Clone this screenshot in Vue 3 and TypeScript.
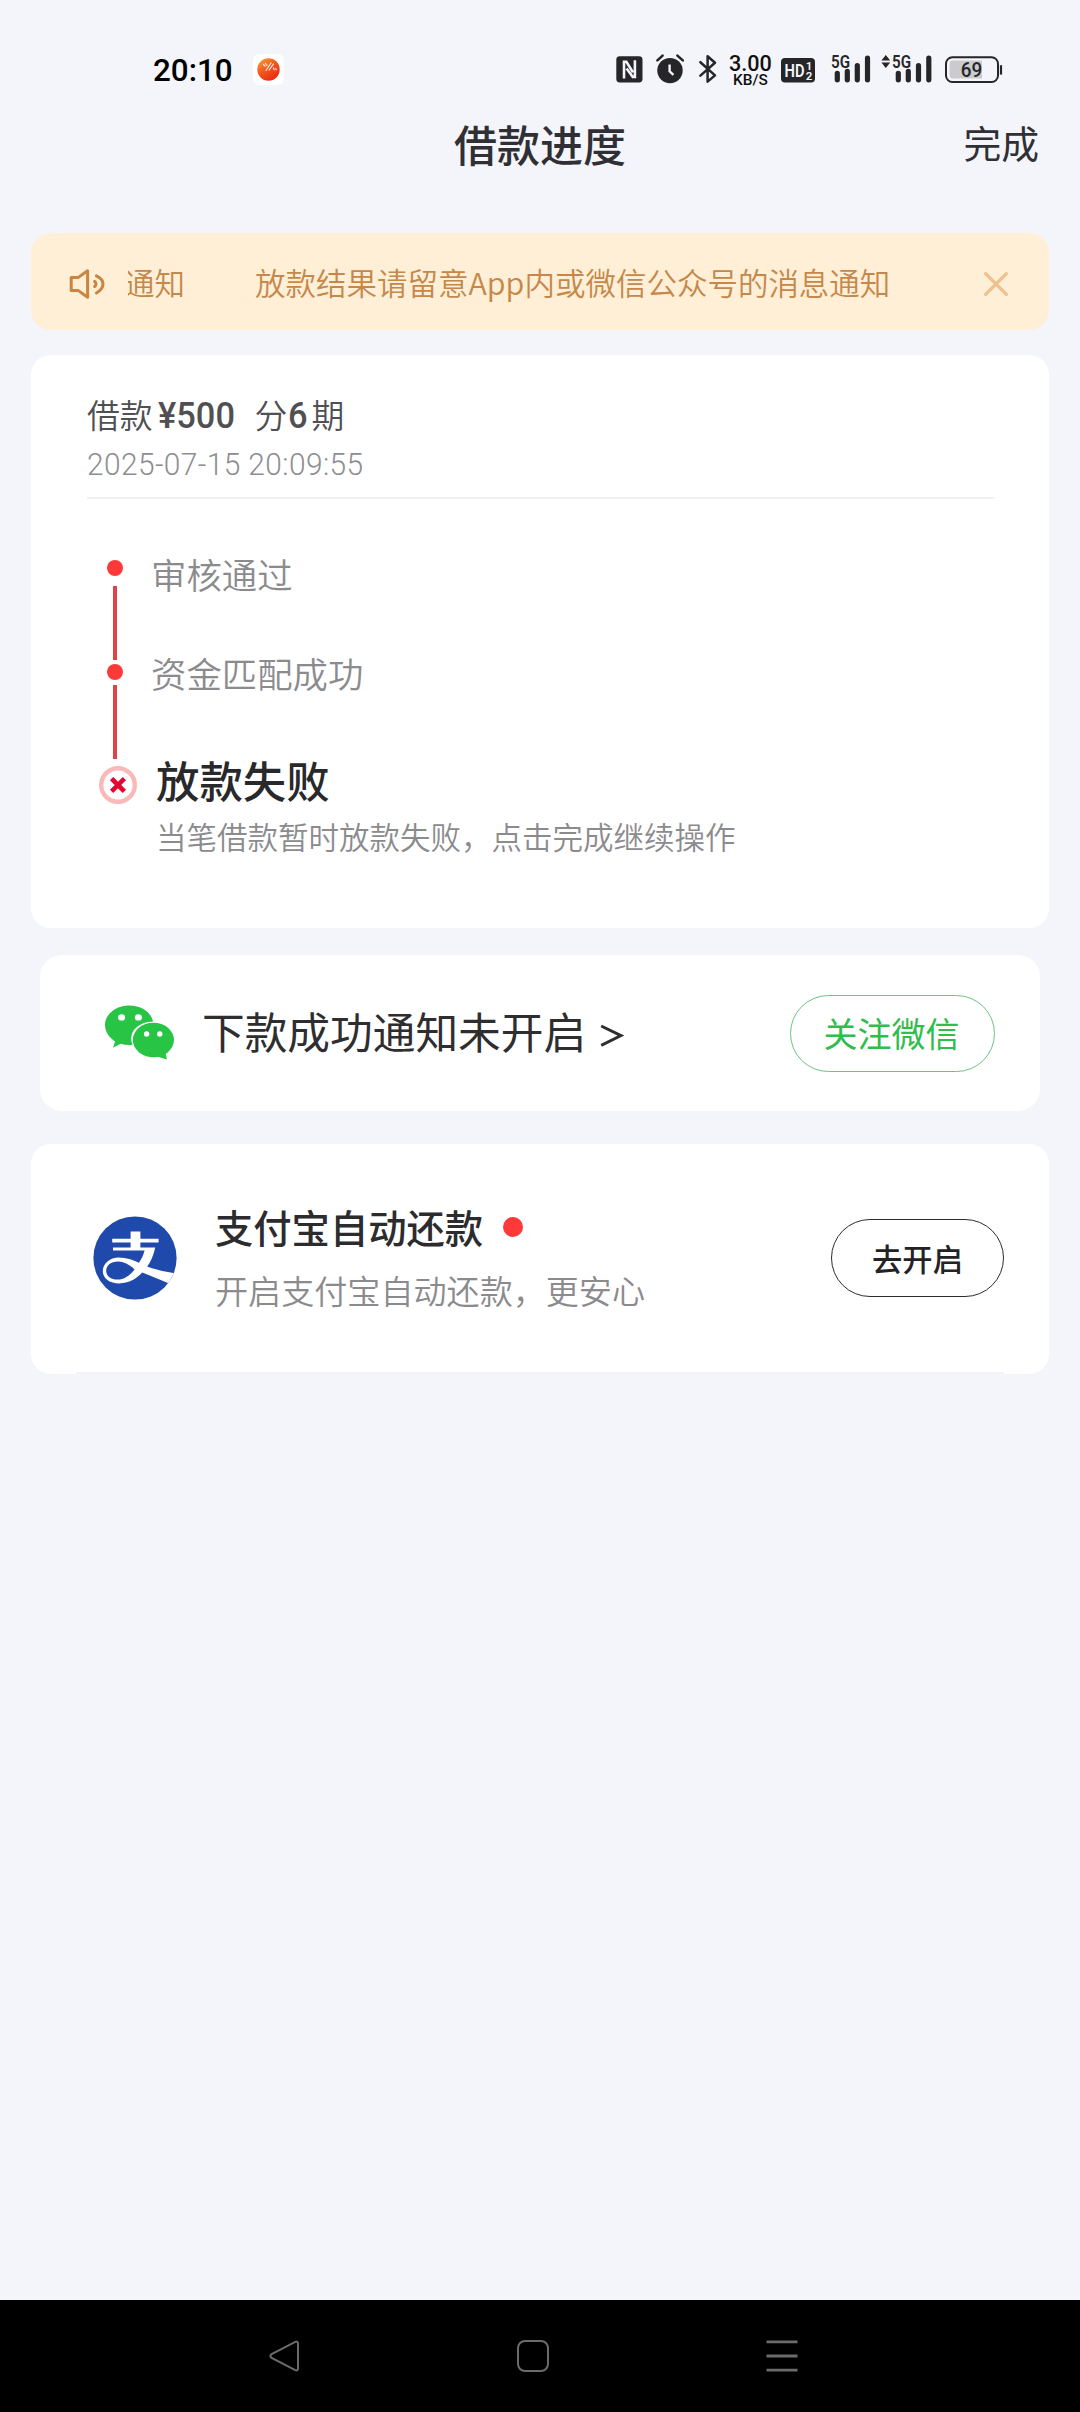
<script setup lang="ts">
interface Step {
  key: string
  label: string
}

const doneSteps: Step[] = [
  { key: 'review', label: '审核通过' },
  { key: 'match', label: '资金匹配成功' },
]
</script>

<template>
  <div class="screen">
    <div class="status">
      <span class="clock">20:10</span>
      <svg class="app-badge" width="31" height="31" viewBox="0 0 31 31">
        <defs>
          <linearGradient id="ball" x1="0.1" y1="0" x2="0.8" y2="1">
            <stop offset="0" stop-color="#f9a13a" />
            <stop offset="0.45" stop-color="#f4581c" />
            <stop offset="1" stop-color="#ea2410" />
          </linearGradient>
        </defs>
        <rect width="31" height="31" rx="6" fill="#fff" />
        <circle cx="15.5" cy="15.5" r="11.2" fill="url(#ball)" />
        <path d="M10.5 10.5l1.5 1.5M12.5 9.5l1.5 2M13 16.5l5-7.5M16.2 16l4.2-6M20.5 14l.6 1.6M22.8 14.5l.4 1.4" fill="none" stroke="#fff" stroke-width="1.2" stroke-linecap="round" opacity="0.9" />
      </svg>

      <svg class="nfc" width="27" height="27" viewBox="0 0 27 27">
        <rect x="0.3" y="0.3" width="26.2" height="26.2" rx="3.4" fill="#262629" />
        <path d="M8 22.4V5.8H10.4L17 16.4M18.9 4.3V21H16.8L10.6 12.4" fill="none" stroke="#f5f6fb" stroke-width="2.6" />
      </svg>
      <svg class="alarm" width="28" height="30" viewBox="0 0 28 30">
        <circle cx="14" cy="16.6" r="12.7" fill="#262629" />
        <path d="M1.4 6.4L6.6 1.6M21.4 1.6L26.8 6.4" stroke="#262629" stroke-width="2.6" stroke-linecap="round" />
        <path d="M13.6 10.5V17.3L17.4 20.8" fill="none" stroke="#f5f6fb" stroke-width="2.4" />
      </svg>
      <svg class="bluetooth" width="18" height="30" viewBox="0 0 18 30">
        <path d="M1.4 8.2L16 21.4L8.6 27.6V2.2L16 8.8L1.4 21.6" fill="none" stroke="#262629" stroke-width="2.5" stroke-linejoin="round" stroke-linecap="round" />
      </svg>
      <div class="speed"><b>3.00</b><i>KB/S</i></div>
      <svg class="hd" width="34" height="25" viewBox="0 0 34 25">
        <rect width="34" height="24.6" rx="4" fill="#262629" />
        <text x="3.6" y="19" font-size="18" font-weight="600" fill="#f5f6fb" textLength="20" lengthAdjust="spacingAndGlyphs">HD</text>
        <text x="24.8" y="12" font-size="11.5" font-weight="600" fill="#f5f6fb">1</text>
        <text x="24.8" y="22" font-size="11.5" font-weight="600" fill="#f5f6fb">2</text>
      </svg>
      <svg class="signal" width="40" height="28" viewBox="0 0 40 28">
        <text x="0" y="13" font-size="18.5" font-weight="600" fill="#262629" textLength="19" lengthAdjust="spacingAndGlyphs">5G</text>
        <path d="M6.3 18.4v6.4M16.3 16.4v8.4M26.3 10.5V24.8M36.5 3.2V24.8" stroke="#262629" stroke-width="5.2" stroke-linecap="round" />
      </svg>
      <svg class="signal-two" width="51" height="28" viewBox="0 0 51 28">
        <path d="M4.8 0L9.2 5.6H0.4ZM4.8 13L9.2 7.6H0.4Z" fill="#262629" />
        <text x="11" y="13" font-size="18.5" font-weight="600" fill="#262629" textLength="19" lengthAdjust="spacingAndGlyphs">5G</text>
        <path d="M17.3 18.4v6.4M27.3 16.4v8.4M37.5 10.5V24.8M47.8 3.2V24.8" stroke="#262629" stroke-width="5.2" stroke-linecap="round" />
      </svg>
      <svg class="battery" width="58" height="28" viewBox="0 0 58 28">
        <rect x="1" y="1.2" width="52" height="24.8" rx="6.5" fill="none" stroke="#262629" stroke-width="2" />
        <path d="M8 4.6H37V22.6H8Q4.6 22.6 4.6 19V8Q4.6 4.6 8 4.6Z" fill="#cbcbcd" />
        <path d="M56 9.2v9.4" stroke="#262629" stroke-width="2.2" />
        <text x="15.8" y="20.5" font-size="19.5" font-weight="500" fill="#262629" textLength="21.5" lengthAdjust="spacingAndGlyphs">69</text>
      </svg>
    </div>

    <header class="nav">
      <h1>借款进度</h1>
      <a class="finish">完成</a>
    </header>

    <section class="notice">
      <svg class="horn" width="36" height="30" viewBox="0 0 36 30">
        <g fill="none" stroke="#c9843f" stroke-width="3" stroke-linejoin="round" stroke-linecap="round">
          <path d="M1.2 8.6H8L17.6 1.8V28.2L8 21.4H1.2Z" />
          <path d="M24.6 12.4Q27.4 15 24.6 17.6" />
          <path d="M26.4 6.8Q33 10 33 15T26.4 24" />
        </g>
      </svg>
      <div class="marquee">
        <span class="tail">通知</span>
        <span>放款结果请留意App内或微信公众号的消息通知</span>
      </div>
      <svg class="dismiss" width="24" height="24" viewBox="0 0 24 24">
        <path d="M1.6 1.6L22.4 22.4M22.4 1.6L1.6 22.4" stroke="#eec08d" stroke-width="3.2" stroke-linecap="round" />
      </svg>
    </section>

    <section class="progress">
      <div class="loan">
        <span>借款</span><b class="amount">¥500</b><span class="split">分</span><b class="count">6</b><span class="unit">期</span>
      </div>
      <div class="time"><span>2025-07-15 20:09:55</span></div>
      <ul class="steps">
        <li v-for="step in doneSteps" :key="step.key" :class="['step', step.key]">
          <div class="rail"><span class="dot"></span><span class="line"></span></div>
          <span class="label">{{ step.label }}</span>
        </li>
        <li class="step failed">
          <svg width="38" height="38" viewBox="0 0 38 38">
            <circle cx="19" cy="19" r="16.8" fill="none" stroke="#fab9b9" stroke-width="4.4" />
            <path d="M14.2 14.2L23.8 23.8M23.8 14.2L14.2 23.8" stroke="#e3072f" stroke-width="4.6" stroke-linecap="square" stroke-linejoin="round" />
          </svg>
          <div class="result">
            <strong>放款失败</strong>
            <p>当笔借款暂时放款失败，点击完成继续操作</p>
          </div>
        </li>
      </ul>
    </section>

    <section class="wechat">
      <svg width="70" height="56" viewBox="0 0 70 56">
        <path d="M24 0.4C37 0.4 46.5 7.5 48 16.8C35 16.8 26.2 24.5 26.2 34C26.2 36.2 26.8 38 27.6 39.7C23.5 40.4 19.5 40 15.8 38.8L8 42.8L10 36.4C4 32.4 0 26.8 0 20C0 9.2 10.8 0.4 24 0.4Z" fill="#28c445" />
        <ellipse cx="48.4" cy="35" rx="20.6" ry="17.2" fill="#28c445" />
        <path d="M52 51.6L61.9 54.6L60.4 47Z" fill="#28c445" />
        <g fill="#fff">
          <ellipse cx="16.6" cy="12.4" rx="3.5" ry="3.2" />
          <ellipse cx="33.4" cy="12.4" rx="3.5" ry="3.2" />
          <circle cx="41.6" cy="29" r="2.7" />
          <circle cx="54.8" cy="29" r="2.7" />
        </g>
      </svg>
      <span class="headline">下款成功通知未开启</span>
      <svg class="arrow" width="24" height="24" viewBox="0 0 24 24">
        <path d="M1.2 2L21 11.6L1.2 21.4" fill="none" stroke="#2e2e30" stroke-width="2.9" />
      </svg>
      <button class="follow">关注微信</button>
    </section>

    <section class="alipay">
      <svg class="logo" width="84" height="84" viewBox="0 0 84 84">
        <defs>
          <clipPath id="disc"><circle cx="42" cy="42" r="41.6" /></clipPath>
        </defs>
        <circle cx="42" cy="42" r="41.6" fill="#1f49ab" />
        <g clip-path="url(#disc)">
          <path d="M37.6 15.6H47.4V22.8H65.6V26.6H47.4V31.4H62.2C60.8 38.6 58 45.4 54.2 50.4C62 53.4 71 55.5 82 57.2L76 67.5C66.5 63.6 57.5 59.8 49.2 56.6C43 63.4 35 67.4 26.4 67.4C16.6 67.4 9.8 62.4 9.8 55C9.8 47.4 17 41.4 25.8 41.4C33.2 41.4 40 43.6 46 46.7C48.6 43 50.4 39.2 51.6 34.6H20V31.6H37.6V26.6H19.2V22.8H37.6Z" fill="#fff" />
          <path d="M41.6 53.4C36 48.6 30.4 45.6 25.2 45.6C17.8 45.6 13.2 49.4 13.2 54.8C13.2 60.4 18 63.6 24.4 63.6C31 63.6 36.6 59.8 41.6 53.4Z" fill="#1f49ab" />
        </g>
      </svg>
      <div class="copy">
        <div class="title"><strong>支付宝自动还款</strong><span class="unread"></span></div>
        <p>开启支付宝自动还款，更安心</p>
      </div>
      <button class="enable">去开启</button>
      <div class="edge"></div>
    </section>

    <footer class="system">
      <svg width="31" height="32" viewBox="0 0 31 32">
        <path d="M26.3 1.9Q29 0.8 29 3.8V28.2Q29 31.2 26.3 30.1L2.2 17.6Q0.6 16 2.2 14.4Z" fill="none" stroke="#6b6b6b" stroke-width="2" />
      </svg>
      <svg width="32" height="32" viewBox="0 0 32 32">
        <rect x="1" y="1" width="30" height="30" rx="7" fill="none" stroke="#6b6b6b" stroke-width="2" />
      </svg>
      <svg width="32" height="32" viewBox="0 0 32 32">
        <path d="M0.5 1.8H31.5M0.5 16H31.5M0.5 30.2H31.5" stroke="#6b6b6b" stroke-width="2.8" />
      </svg>
    </footer>
  </div>
</template>

<style>
body {
  background: #f4f5fa;
}
</style>

<style scoped>
.screen {
  display: flex;
  flex-direction: column;
  width: 1080px;
  height: 2412px;
  overflow: hidden;
  background: #f4f5fa;
  color: #2c2c2e;
  font-family: "Noto Sans CJK SC", "Noto Sans", sans-serif;
}
.screen *,
.screen {
  box-sizing: border-box;
}
svg {
  display: block;
  flex: none;
  overflow: visible;
}
svg text {
  font-family: Roboto, sans-serif;
}
h1,
p,
ul {
  margin: 0;
  padding: 0;
}
ul {
  list-style: none;
}
span,
strong,
b,
p,
h1,
a {
  white-space: nowrap;
}

.status {
  display: flex;
  align-items: flex-start;
  height: 100px;
  padding-left: 153px;
}
.clock {
  width: 100px;
  margin-top: 53px;
  color: #000;
  font: 500 31.4px/36px Roboto, sans-serif;
}
.app-badge { margin-top: 54px; }
.nfc { margin: 56px 0 0 332px; }
.alarm { margin: 54px 0 0 13px; }
.bluetooth { margin: 54px 0 0 15px; }
.speed {
  display: flex;
  flex-direction: column;
  align-items: center;
  width: 43px;
  margin: 54px 0 0 12px;
  color: #111;
  font-family: Roboto, sans-serif;
}
.speed b {
  font-size: 21.6px;
  font-weight: 500;
  line-height: 20px;
}
.speed i {
  font-size: 15.4px;
  font-style: normal;
  font-weight: 500;
  line-height: 13px;
}
.hd { margin: 58px 0 0 9px; }
.signal { margin: 55px 0 0 16px; }
.signal-two { margin: 55px 0 0 10px; }
.battery { margin: 56px 0 0 13px; }

.nav {
  display: grid;
  grid-template-columns: 1fr auto 1fr;
  align-items: center;
  height: 86px;
  padding-right: 42px;
  padding-left: 42px;
}
.nav h1 {
  grid-column: 2;
  margin-top: -1px;
  font-size: 43px;
  font-weight: 500;
  line-height: 60px;
  color: #303034;
}
.finish {
  justify-self: end;
  margin: -3px -1px 0 0;
  font-size: 37.8px;
  line-height: 56px;
  color: #303034;
}

.notice {
  display: flex;
  align-items: center;
  height: 97px;
  margin: 47px 31px 0;
  padding: 0 41px 0 39px;
  border-radius: 20px;
  background: #ffefd7;
  color: #c5884a;
}
.horn,
.dismiss { margin-top: 4px; }
.marquee {
  display: flex;
  flex: 1;
  margin-left: 22px;
  overflow: hidden;
  font-size: 30.5px;
  font-weight: 350;
  line-height: 46px;
}
.tail {
  margin-right: 70px;
  margin-left: -4px;
}

.progress {
  height: 573px;
  margin: 25px 31px 0;
  padding: 39px 54px 0 56px;
  border-radius: 20px;
  background: #fff;
}
.loan {
  display: flex;
  height: 48px;
  color: #505053;
  font-size: 32.8px;
  font-weight: 350;
  line-height: 40px;
}
.loan b {
  font-family: Roboto, sans-serif;
  font-size: 37px;
  font-weight: 500;
  line-height: 44px;
  transform-origin: 0 50%;
  transform: scaleX(0.93);
}
.amount {
  width: 97px;
  margin-left: 5px;
}
.count {
  width: 23px;
  margin-left: 1px;
}
.time {
  height: 55px;
  padding-top: 1px;
  color: #8e8e91;
  font: 350 30.5px/44px Roboto, sans-serif;
}
.time span {
  display: inline-block;
  letter-spacing: 0.4px;
  transform-origin: 0 50%;
  transform: scaleX(0.98);
}
.steps {
  padding-top: 61px;
  border-top: 2px solid #f1f1f3;
}
.step {
  display: flex;
  align-items: flex-start;
}
.rail {
  display: flex;
  flex: none;
  flex-direction: column;
  align-items: center;
  width: 16px;
  margin-left: 20px;
}
.dot {
  width: 16px;
  height: 16px;
  border-radius: 50%;
  background: #fd3a39;
}
.line {
  width: 4px;
  height: 74px;
  margin-top: 10px;
  background: #e14245;
}
.review { height: 104px; }
.match { height: 100px; }
.match .line { margin-top: 5px; }
.label {
  margin: -10px 0 0 28px;
  color: #8b8b8e;
  font-size: 35.4px;
  font-weight: 350;
  line-height: 48px;
}
.match .label { margin-top: -15px; }
.failed svg { margin: 2px 0 0 12px; }
.result { margin-left: 19px; }
.result strong {
  display: block;
  margin: -15px 0 3px;
  font-size: 43.4px;
  font-weight: 500;
  line-height: 60px;
  color: #29292b;
}
.result p {
  color: #8b8b8e;
  font-size: 30.5px;
  font-weight: 350;
  line-height: 48px;
}

.wechat {
  display: flex;
  align-items: center;
  height: 156px;
  margin: 27px 40px 0;
  padding: 0 45px 0 65px;
  border-radius: 22px;
  background: #fff;
}
.headline {
  margin: -7px 0 0 27px;
  font-size: 42.7px;
  line-height: 60px;
  color: #2e2e30;
}
.arrow { margin: 6px 0 0 14px; }
.follow,
.enable {
  flex: none;
  margin: 0 0 0 auto;
  padding: 0;
  border-radius: 40px;
  background: none;
  font-family: inherit;
}
.follow {
  width: 205px;
  height: 77px;
  padding: 0 2px 2px 0;
  border: 1.5px solid #6fc283;
  color: #2fbd4c;
  font-size: 34px;
}
.enable {
  width: 173px;
  height: 78px;
  border: 1px solid #2c2c2e;
  color: #232325;
  font-size: 30.3px;
  font-weight: 500;
}

.alipay {
  position: relative;
  display: flex;
  align-items: flex-start;
  height: 230px;
  margin: 33px 31px 0;
  padding: 0 45px 0 62px;
  border-radius: 20px;
  background: #fff;
}
.logo { margin-top: 72px; }
.copy {
  margin: 54px 0 0 38px;
}
.title {
  display: flex;
  align-items: center;
  height: 58px;
}
.title strong {
  font-size: 38.3px;
  font-weight: 500;
  line-height: 58px;
}
.unread {
  width: 20px;
  height: 20px;
  margin: -1px 0 0 20px;
  border-radius: 50%;
  background: #fd3a39;
}
.copy p {
  margin-top: 10px;
  color: #8b8b8e;
  font-size: 33.1px;
  font-weight: 350;
  line-height: 48px;
}
.enable { margin-top: 75px; }
.edge {
  position: absolute;
  right: 45px;
  bottom: 0;
  left: 45px;
  height: 2px;
  background: #f3f3f5;
}

.system {
  display: flex;
  gap: 217px;
  height: 112px;
  margin-top: auto;
  padding: 40px 0 0 269px;
  background: #000;
}
</style>
